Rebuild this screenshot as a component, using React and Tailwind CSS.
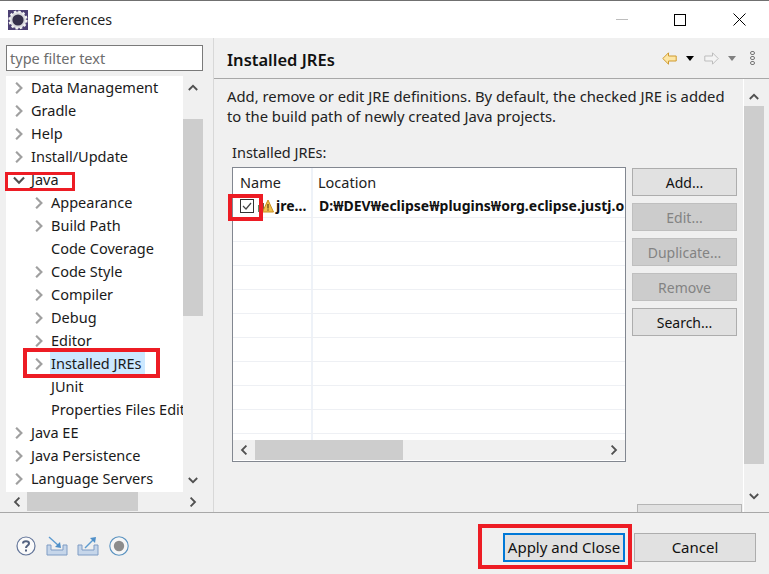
const treeRows = [
  { label: "Data Management", level: 0, arrow: "right" },
  { label: "Gradle", level: 0, arrow: "right" },
  { label: "Help", level: 0, arrow: "right" },
  { label: "Install/Update", level: 0, arrow: "right" },
  { label: "Java", level: 0, arrow: "down" },
  { label: "Appearance", level: 1, arrow: "right" },
  { label: "Build Path", level: 1, arrow: "right" },
  { label: "Code Coverage", level: 1 },
  { label: "Code Style", level: 1, arrow: "right" },
  { label: "Compiler", level: 1, arrow: "right" },
  { label: "Debug", level: 1, arrow: "right" },
  { label: "Editor", level: 1, arrow: "right" },
  { label: "Installed JREs", level: 1, arrow: "right", selected: true },
  { label: "JUnit", level: 1 },
  { label: "Properties Files Editor", level: 1 },
  { label: "Java EE", level: 0, arrow: "right" },
  { label: "Java Persistence", level: 0, arrow: "right" },
  { label: "Language Servers", level: 0, arrow: "right" },
];

const sideButtons = [
  { label: "Add..." },
  { label: "Edit...", disabled: true },
  { label: "Duplicate...", disabled: true },
  { label: "Remove", disabled: true },
  { label: "Search..." },
];

function Chevron({ dir, size = 10, className = "" }) {
  const d = {
    right: "M2.6 .6 L7 5 L2.6 9.4",
    left: "M7.4 .6 L3 5 L7.4 9.4",
    up: "M.8 7 L5 2.8 L9.2 7",
    down: "M.8 3 L5 7.2 L9.2 3",
  }[dir];
  return (
    <svg className={className} width={size} height={size} viewBox="0 0 10 10" fill="none" stroke="currentColor" strokeWidth="1.8">
      <path d={d} />
    </svg>
  );
}

function EclipseLogo() {
  return (
    <svg width="20" height="20" viewBox="0 0 20 20" className="shrink-0">
      <rect width="20" height="20" fill="#4b3f72" />
      <circle cx="10" cy="10" r="8.4" fill="#d8d8dc" />
      <circle cx="10" cy="10" r="8.4" fill="none" stroke="#f2f2f2" strokeWidth="2.4" strokeDasharray="2.4 2" />
      <circle cx="10" cy="10" r="5.6" fill="#35304a" />
    </svg>
  );
}

function TreeRow({ row }) {
  return (
    <div className="h-[23px] flex items-center whitespace-nowrap">
      <div className={row.level === 0 ? "w-[24px] shrink-0 flex justify-end pr-[5px]" : "w-[44px] shrink-0 flex justify-end pr-[5px]"}>
        {row.arrow === "right" && <Chevron dir="right" size={12} className="text-[#a0a0a0]" />}
        {row.arrow === "down" && <Chevron dir="down" size={12} className="text-[#505050]" />}
      </div>
      <span className={row.selected ? "bg-[#cce8ff] h-[23px] leading-[23px] pl-[1px] pr-[3px]" : "pl-[1px]"}>{row.label}</span>
    </div>
  );
}

function ArrowToolbarIcon({ flip, active }) {
  return (
    <svg width="15" height="13" viewBox="0 0 15 13" className={flip ? "-scale-x-100" : ""}>
      <path
        d="M6.5 .8 L.8 6.5 L6.5 12.2 V9 H14.2 V4 H6.5 Z"
        fill={active ? "#fde6a5" : "#f4f4f4"}
        stroke={active ? "#cf9a2f" : "#bdbdbd"}
        strokeWidth="1"
      />
    </svg>
  );
}

function Caret({ color }) {
  return <div className={color === "dark" ? "w-0 h-0 border-x-[4.5px] border-x-transparent border-t-[5px] border-t-black" : "w-0 h-0 border-x-[4.5px] border-x-transparent border-t-[5px] border-t-[#808080]"} />;
}

function JreIcon() {
  return (
    <svg width="16" height="14" viewBox="0 0 16 14" className="shrink-0">
      <rect x="0" y="6" width="3" height="7" fill="#5d8c6a" />
      <rect x="3" y="4" width="3" height="9" fill="#7a5c3a" />
      <path d="M10 1 L15.5 13 H4.5 Z" fill="#f2c14e" stroke="#c98f1d" strokeWidth="1" />
      <rect x="9.4" y="5" width="1.2" height="4.5" fill="#5a4210" />
      <rect x="9.4" y="10.4" width="1.2" height="1.2" fill="#5a4210" />
    </svg>
  );
}

export default function App() {
  return (
    <div className="relative w-[769px] h-[574px] overflow-hidden bg-[#f0f0f0] text-[14.5px] text-[#1a1a1a] flex flex-col font-['Noto_Sans','Open_Sans',sans-serif]">
      {/* title bar */}
      <div className="h-[38px] bg-white border-t border-[#707070] flex items-center shrink-0">
        <div className="pl-[8px] pr-[5px]"><EclipseLogo /></div>
        <span className="text-[#222] text-[14.2px]">Preferences</span>
        <div className="ml-auto flex items-center">
          <div className="w-[58px] flex justify-center"><div className="w-3 h-px bg-[#bdbdbd]" /></div>
          <div className="w-[58px] flex justify-center"><div className="w-3 h-3 border border-black" /></div>
          <div className="w-[60px] flex justify-center">
            <svg width="13" height="13" viewBox="0 0 13 13" stroke="black" strokeWidth="1"><path d="M.5 .5 L12.5 12.5 M12.5 .5 L.5 12.5" /></svg>
          </div>
        </div>
      </div>

      <div className="flex flex-1 min-h-0">
        {/* left pane */}
        <div className="w-[214px] shrink-0 pl-[6px] pr-[10px] pt-[7px] flex flex-col border-r border-[#d8d8d8]">
          <div className="h-[26px] bg-white border border-[#7a7a7a] px-[3px] leading-[24px] text-[#6d6d6d] shrink-0">type filter text</div>
          <div className="flex mt-[5px] h-[416px] shrink-0">
            <div className="w-[177px] bg-white overflow-hidden">
              {treeRows.map((row) => <TreeRow key={row.label} row={row} />)}
            </div>
            <div className="w-[20px] bg-[#f0f0f0] flex flex-col items-center text-[#505050]">
              <div className="h-[43px] pt-[7px]"><Chevron dir="up" /></div>
              <div className="w-full h-[197px] bg-[#cdcdcd]" />
              <div className="mt-auto pb-[7px]"><Chevron dir="down" /></div>
            </div>
          </div>
          <div className="h-[19px] flex items-center text-[#505050] shrink-0">
            <div className="w-[21px] flex justify-center"><Chevron dir="left" /></div>
            <div className="w-[111px] h-full bg-[#cdcdcd]" />
            <div className="ml-auto w-[21px] flex justify-center"><Chevron dir="right" /></div>
          </div>
        </div>

        {/* right pane */}
        <div className="flex-1 min-w-0 flex flex-col">
          <div className="h-[41px] shrink-0 border-b border-[#a8a8a8] flex items-center pl-[13px] pr-[14px]">
            <span className="text-[16.5px] font-semibold text-[#111] pt-[5px]">Installed JREs</span>
            <div className="ml-auto flex items-center">
              <ArrowToolbarIcon active />
              <div className="ml-[9px]"><Caret color="dark" /></div>
              <div className="ml-[10px]"><ArrowToolbarIcon flip /></div>
              <div className="ml-[9px]"><Caret color="gray" /></div>
              <div className="ml-[14px] flex flex-col gap-[1px]">
                <div className="w-[5px] h-[4px] rounded-full border border-[#777]" />
                <div className="w-[5px] h-[4px] rounded-full border border-[#777]" />
                <div className="w-[5px] h-[4px] rounded-full border border-[#777]" />
              </div>
            </div>
          </div>

          <div className="flex-1 min-h-0 flex">
            <div className="w-[529px] shrink-0 pl-[13px] pt-[7px] relative">
              <p className="leading-[20px] text-[#222] text-[14.8px] w-[515px] whitespace-nowrap">
                Add, remove or edit JRE definitions. By default, the checked JRE is added
                <br />
                to the build path of newly created Java projects.
              </p>
              <div className="pl-[5px] mt-[16px] leading-[20px] text-[#222]">Installed JREs:</div>
              <div className="flex mt-[5px] pl-[5px]">
                <div className="w-[394px] h-[295px] border border-[#828790] bg-white flex flex-col overflow-hidden shrink-0">
                  <div className="flex h-[26px] shrink-0">
                    <div className="w-[80px] shrink-0 pl-[7px] pt-[4px] border-r-2 border-[#eef2f8] text-[#222]">Name</div>
                    <div className="pl-[5px] pt-[4px] text-[#222]">Location</div>
                  </div>
                  <div className="flex h-[24px] shrink-0 border-b border-[#eef0f4] font-bold text-[#111] text-[14px]">
                    <div className="w-[80px] shrink-0 flex items-center pl-[7px] border-r-2 border-[#eef2f8] overflow-hidden">
                      <div className="w-[14px] h-[14px] border border-[#333] flex items-center justify-center shrink-0">
                        <svg width="10" height="10" viewBox="0 0 10 10" fill="none" stroke="#444" strokeWidth="1.2"><path d="M1 5 L4 8 L9 2" /></svg>
                      </div>
                      <div className="ml-[4px]"><JreIcon /></div>
                      <span className="ml-[2px] whitespace-nowrap">jre...</span>
                    </div>
                    <div className="pl-[6px] flex items-center whitespace-nowrap">D:₩DEV₩eclipse₩plugins₩org.eclipse.justj.o</div>
                  </div>
                  {[0, 1, 2, 3, 4, 5, 6, 7, 8].map((i) => (
                    <div key={i} className="flex h-[24px] shrink-0 border-b border-[#eef0f4]">
                      <div className="w-[80px] border-r-2 border-[#eef2f8]" />
                    </div>
                  ))}
                  <div className="flex-1 min-h-0">
                    <div className="w-[80px] h-full border-r-2 border-[#eef2f8]" />
                  </div>
                  <div className="h-[20px] mb-[1px] shrink-0 flex items-center bg-[#f0f0f0] text-[#505050]">
                    <div className="w-[22px] flex justify-center shrink-0"><Chevron dir="left" /></div>
                    <div className="w-[148px] h-full bg-[#cdcdcd]" />
                    <div className="ml-auto w-[22px] flex justify-center"><Chevron dir="right" /></div>
                  </div>
                </div>
                <div className="ml-[6px] mt-[1px] flex flex-col gap-[7px] w-[105px] shrink-0 text-[14px]">
                  {sideButtons.map((b) => (
                    <div
                      key={b.label}
                      className={b.disabled
                        ? "h-[28px] border border-[#bfbfbf] bg-[#cccccc] text-[#838383] flex items-center justify-center"
                        : "h-[28px] border border-[#adadad] bg-[#e1e1e1] text-[#111] flex items-center justify-center"}
                    >
                      {b.label}
                    </div>
                  ))}
                </div>
              </div>
              <div className="absolute left-[423px] right-[1px] bottom-0 h-[8px] border border-b-0 border-[#b5b5b5] bg-[#e1e1e1]" />
            </div>
            <div className="w-[21px] shrink-0 border-l border-white flex flex-col items-center text-[#505050]">
              <div className="h-[27px] pt-[13px]"><Chevron dir="up" /></div>
              <div className="w-full h-[358px] bg-[#cdcdcd]" />
              <div className="mt-auto pb-[11px]"><Chevron dir="down" /></div>
            </div>
            <div className="flex-1" />
          </div>
        </div>
      </div>

      {/* footer */}
      <div className="h-[62px] shrink-0 border-t border-[#a8a8a8] flex items-start pt-[20px] pl-[16px]">
        <div className="flex items-center mt-[3px]">
          <svg width="20" height="20" viewBox="0 0 20 20" fill="none">
            <circle cx="10" cy="10" r="9" stroke="#64769a" strokeWidth="1.2" fill="#fafafa" />
            <path d="M7 7.5 C7 4.5 13 4.5 13 7.5 C13 9.5 10 9.5 10 12" stroke="#52617f" strokeWidth="2" />
            <rect x="9" y="13.5" width="2" height="2" fill="#52617f" />
          </svg>
          <svg className="ml-[10px]" width="22" height="20" viewBox="0 0 22 20" fill="none">
            <path d="M1 9 V19 H21 V9 H17 V14 H5 V9 Z" fill="#c6d6ea" stroke="#7f9cc4" />
            <path d="M3 1 L13 10" stroke="#5d9bd0" strokeWidth="1.4" />
            <path d="M15 12 L9 11 L14 6 Z" fill="#4f8fc8" />
          </svg>
          <svg className="ml-[9px]" width="22" height="20" viewBox="0 0 22 20" fill="none">
            <path d="M1 9 V19 H21 V9 H17 V14 H5 V9 Z" fill="#c6d6ea" stroke="#7f9cc4" />
            <path d="M8 12 L17 3" stroke="#5d9bd0" strokeWidth="1.4" />
            <path d="M19 1 L13 2 L18 7 Z" fill="#4f8fc8" />
          </svg>
          <svg className="ml-[10px]" width="20" height="20" viewBox="0 0 20 20" fill="none">
            <circle cx="10" cy="10" r="9.2" stroke="#5b93c0" strokeWidth="1.1" fill="#f6f6f6" />
            <circle cx="10" cy="10" r="5.2" fill="#8c8c8c" />
          </svg>
        </div>
        <div className="ml-auto flex gap-[9px] pr-[13px] text-[15px]">
          <div className="w-[122px] h-[29px] border-2 border-[#0078d7] bg-[#e1e1e1] text-[#111] flex items-center justify-center">Apply and Close</div>
          <div className="w-[122px] h-[29px] border border-[#adadad] bg-[#e1e1e1] text-[#111] flex items-center justify-center">Cancel</div>
        </div>
      </div>

      {/* red annotation boxes */}
      <div className="absolute left-[5px] top-[172px] w-[70px] h-[19px] border-[3px] border-[#ed1c24]" />
      <div className="absolute left-[23px] top-[348px] w-[137px] h-[30px] border-[4px] border-[#ed1c24]" />
      <div className="absolute left-[228px] top-[194px] w-[35px] h-[27px] border-[4px] border-[#ed1c24]" />
      <div className="absolute left-[478px] top-[524px] w-[154px] h-[45px] border-[4px] border-[#ed1c24]" />
    </div>
  );
}
